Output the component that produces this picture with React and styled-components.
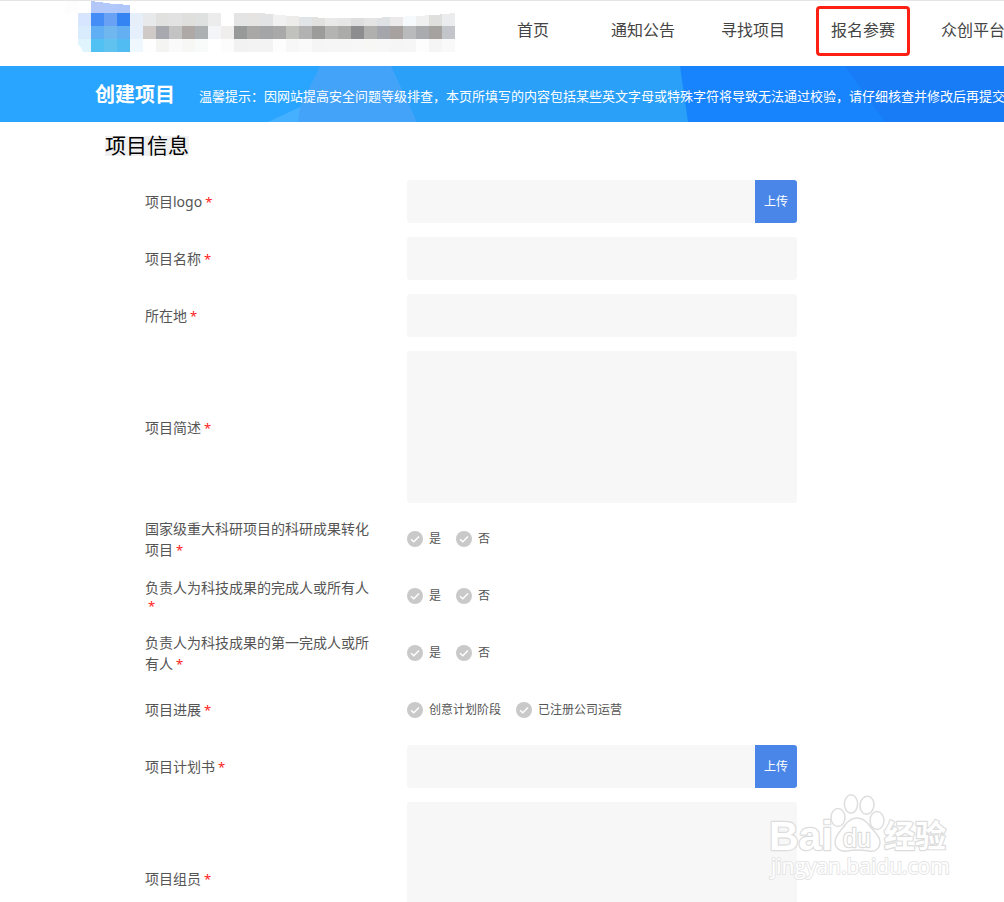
import React from "react";
import styled, { createGlobalStyle } from "styled-components";

const GlobalStyle = createGlobalStyle`
  * { box-sizing: border-box; }
  body {
    margin: 0;
    background: #fff;
    color: #555;
    font-family: "Noto Sans", "Noto Sans CJK SC", sans-serif;
    font-size: 14px;
  }
  input, textarea, button { font: inherit; }
`;

const Page = styled.div`
  position: relative;
  overflow: hidden;
`;

const Header = styled.header`
  display: flex;
  align-items: flex-start;
  height: 66px;
  padding-left: 65px;
  gap: 23px;
  border-top: 1px solid #e5e5e5;
  overflow: hidden;
`;

const LogoArt = styled.svg`
  flex: none;
  display: block;
  margin-top: -1px;
`;

const Nav = styled.nav`
  display: flex;
  flex: none;
  align-items: center;
  height: 60px;
`;

const NavSlot = styled.div`
  display: flex;
  flex: none;
  justify-content: center;
  width: 110px;
`;

const NavLink = styled.a`
  display: flex;
  align-items: center;
  justify-content: center;
  width: 94px;
  height: 50px;
  padding-bottom: 2px;
  border: 3px solid ${(p) => (p.$marked ? "#ff2014" : "transparent")};
  border-radius: 4px;
  color: #444;
  font-size: 16px;
  line-height: 24px;
  text-decoration: none;
  white-space: nowrap;
`;

const Banner = styled.section`
  position: relative;
  display: flex;
  align-items: center;
  gap: 24px;
  height: 56px;
  padding-left: 95px;
  background: #29a5ff;
  color: #fff;
  overflow: hidden;
  white-space: nowrap;
`;

const BannerArt = styled.svg`
  position: absolute;
  top: 0;
  left: 0;
`;

const BannerTitle = styled.h1`
  position: relative;
  margin: 0;
  padding-top: 2px;
  font-size: 20px;
  line-height: 28px;
  font-weight: 700;
`;

const BannerTip = styled.p`
  position: relative;
  margin: 0;
  padding-top: 4px;
  font-size: 13px;
  line-height: 20px;
`;

const Main = styled.main`
  padding: 14px 105px 0;
`;

const SectionTitle = styled.h2`
  width: max-content;
  margin: 0 0 24px;
  padding-bottom: 2px;
  background: #f0f0f0;
  color: #000;
  font-size: 21px;
  line-height: 18px;
  font-weight: 400;
`;

const Form = styled.form`
  display: flex;
  flex-direction: column;
  gap: 14px;
  padding-left: 40px;
`;

const Row = styled.div`
  display: grid;
  grid-template-columns: 226px minmax(0, 390px);
  column-gap: 36px;
  align-items: center;
  min-height: 43px;
`;

const RowLabel = styled.label`
  line-height: 16px;
`;

const LabelText = styled.span`
  line-height: 21px;
`;

const Star = styled.span`
  margin-left: 3px;
  color: #ff2020;
  font-size: 13px;
`;

const TextInput = styled.input`
  min-width: 0;
  width: 100%;
  height: 43px;
  padding: 0 12px;
  border: 0;
  border-radius: 3px;
  background: #f7f7f7;
`;

const TextArea = styled.textarea`
  display: block;
  width: 100%;
  height: 152px;
  padding: 12px;
  border: 0;
  border-radius: 3px;
  background: #f7f7f7;
  resize: none;
`;

const Upload = styled.div`
  display: flex;
  border-radius: 3px;
  overflow: hidden;
`;

const UploadButton = styled.button`
  flex: none;
  width: 42px;
  height: 43px;
  padding: 0;
  border: 0;
  background: #4a86e8;
  color: #fff;
  font-size: 12px;
  line-height: 20px;
`;

const Options = styled.div`
  display: flex;
  gap: 15px;
`;

const Option = styled.label`
  display: flex;
  align-items: center;
  gap: 6px;
  font-size: 12px;
  line-height: 18px;
`;

const RadioBox = styled.span`
  display: grid;
  width: 16px;
  height: 16px;
  > * { grid-area: 1 / 1; }
`;

const Radio = styled.input`
  appearance: none;
  width: 16px;
  height: 16px;
  margin: 0;
  border-radius: 50%;
  background: #c9c9c9;
  &:checked { background: #4a86e8; }
`;

const Tick = styled.svg`
  pointer-events: none;
`;

const Watermark = styled.svg`
  position: absolute;
  top: 790px;
  left: 765px;
  pointer-events: none;
`;

const CELL = 13;
const MOSAIC = [
  "fdfdfe b3c8f9 b1c8fa afc6f9",
  "- d7e6fe 458df6 69a1f4 3584f4 e6eef9 e8e9ea e1e1e0 e1e2e1 dfdfdd dfe1e1 ebeceb - e4e4e4 e5e4e3 e1e3e5 f1f1f1 edecea e2e5e8 e1e1e0 e9e9e9 e6e6e6 dedede e4e4e4 dfe2e5 ebe9e9 f7fafd f0f0f0 dfdfdd eaecee",
  "- d8ecfd 60aef3 70b7f0 64aff2 e6effc cfcac7 a8a9ae c3c3c3 aea9a6 acb0b3 f3f5f8 efeeed 979a98 a9a8a6 a3a5a7 a9a9a9 c1c1be b2b2b2 9c9c9b b4b4b2 ababaa 8d8d8f b0b0ae a5a6ac a7a29f b8babc a9abae a5a2a0 c2c6cb",
  "- e0f4fd 51c1f4 60c3ef 50bcf1 f0f8ff fefefe f4f4f2 fafafa f7f7f5 f9fbfa - fcfcfc f2f2f2 f3f3f3 f3f3f3 fdfdfd f7f7f7 fafafa f5f5f5 f6f6f6 f6f6f6 f7f7f7 f7f7f5 f7f7f7 f5f5f5 f6f6f6 fdfdfd f5f5f5 f9f9f9",
].map((row) => row.split(" "));

function Logo() {
  return (
    <LogoArt width="390" height="52" shapeRendering="crispEdges" aria-hidden="true">
      {MOSAIC.map((row, y) =>
        row.map((c, x) =>
          c === "-" ? null : (
            <rect
              key={`${x}-${y}`}
              x={(y === 0 ? x + (x > 0 ? 1 : 0) : x) * CELL}
              y={y * CELL}
              width={CELL}
              height={CELL}
              fill={`#${c}`}
            />
          )
        )
      )}
      <path d="M26 0H65V5Q45 4 26 1Z" fill="#fff" />
      <path d="M195 13Q240 18 275 18T330 17L370 15L390 13Z" fill="#fff" />
      <path d="M13 45Q15 45 18 52H13Z" fill="#fff" />
    </LogoArt>
  );
}

function RadioRow({ name, label, options }) {
  return (
    <Row role="radiogroup" aria-labelledby={name}>
      <RowLabel as="div" id={name}>
        <LabelText>{label}</LabelText>
        <Star>*</Star>
      </RowLabel>
      <Options>
        {options.map((o) => (
          <Option key={o}>
            <RadioBox>
              <Radio type="radio" name={name} value={o} />
              <Tick width="16" height="16" viewBox="0 0 16 16" aria-hidden="true">
                <path d="M4 8.2L6.8 10.8L12 5.5" fill="none" stroke="#fff" strokeWidth="1.4" />
              </Tick>
            </RadioBox>
            {o}
          </Option>
        ))}
      </Options>
    </Row>
  );
}

function FieldRow({ id, label, kind = "text" }) {
  return (
    <Row>
      <RowLabel htmlFor={id}>
        <LabelText>{label}</LabelText>
        <Star>*</Star>
      </RowLabel>
      {kind === "text" && <TextInput id={id} type="text" />}
      {kind === "area" && <TextArea id={id} />}
      {kind === "upload" && (
        <Upload>
          <TextInput id={id} type="text" readOnly />
          <UploadButton type="button">上传</UploadButton>
        </Upload>
      )}
    </Row>
  );
}

const NAV = ["首页", "通知公告", "寻找项目", "报名参赛", "众创平台"];

export default function App() {
  return (
    <Page>
      <GlobalStyle />
      <Header>
        <Logo />
        <Nav>
          {NAV.map((n) => (
            <NavSlot key={n}>
              <NavLink href="#" $marked={n === "报名参赛"}>{n}</NavLink>
            </NavSlot>
          ))}
        </Nav>
      </Header>
      <Banner>
        <BannerArt width="1920" height="56" aria-hidden="true">
          <path d="M391 0H1920V56H417Z" fill="#2aa0f9" />
          <path d="M268 56L300 41V56Z" fill="#45b0ff" />
          <path d="M320 0H391L417 56H298L300 41Z" fill="#42a3f9" />
          <path d="M680 0H1920V56H688Z" fill="#1783fc" />
          <path d="M845 0H1920V56H885Z" fill="#187cf7" />
        </BannerArt>
        <BannerTitle>创建项目</BannerTitle>
        <BannerTip>
          温馨提示：因网站提高安全问题等级排查，本页所填写的内容包括某些英文字母或特殊字符将导致无法通过校验，请仔细核查并修改后再提交
        </BannerTip>
      </Banner>
      <Main>
        <SectionTitle>项目信息</SectionTitle>
        <Form>
          <FieldRow id="logo" label="项目logo" kind="upload" />
          <FieldRow id="name" label="项目名称" />
          <FieldRow id="place" label="所在地" />
          <FieldRow id="brief" label="项目简述" kind="area" />
          <RadioRow name="national" label="国家级重大科研项目的科研成果转化项目" options={["是", "否"]} />
          <RadioRow name="owner" label="负责人为科技成果的完成人或所有人" options={["是", "否"]} />
          <RadioRow name="first" label="负责人为科技成果的第一完成人或所有人" options={["是", "否"]} />
          <RadioRow name="stage" label="项目进展" options={["创意计划阶段", "已注册公司运营"]} />
          <FieldRow id="plan" label="项目计划书" kind="upload" />
          <FieldRow id="members" label="项目组员" kind="area" />
        </Form>
      </Main>
      <Watermark width="190" height="95" viewBox="0 0 190 95">
        <g fill="#fff" stroke="#dedede" strokeWidth="1.5" fillOpacity="0.85">
          <ellipse cx="73" cy="27.5" rx="7" ry="9" />
          <ellipse cx="86" cy="14" rx="6.6" ry="9.2" />
          <ellipse cx="102" cy="15.2" rx="7" ry="9" transform="rotate(8 102 15)" />
          <ellipse cx="112" cy="30.5" rx="7" ry="9" />
          <path d="M92 28C97 28 101 31 104 35C108 41 115 45 115 52C115 59 110 62 104 61C96 59.500 89 59.500 82 61C75 62 70 58 70 52C70 45 76 41 80 35C83 31 87 28 92 28Z" />
        </g>
        <g fill="#fff" stroke="#dcdcdc" strokeWidth="2.4" strokeLinejoin="round" paintOrder="stroke" fontFamily='"Liberation Sans", sans-serif' fontWeight="700">
          <text x="4" y="60" fontSize="41">Bai</text>
          <text x="78" y="57" fontSize="25" fontWeight="400">du</text>
          <text x="119" y="57" fontSize="31" fontFamily='"Noto Sans CJK SC", sans-serif'>经验</text>
          <text x="6" y="84" fontSize="21" fontWeight="400" stroke="#e6e6e6" strokeWidth="2" fontFamily='"Open Sans", "Noto Sans", sans-serif'>jingyan.baidu.com</text>
        </g>
      </Watermark>
    </Page>
  );
}
